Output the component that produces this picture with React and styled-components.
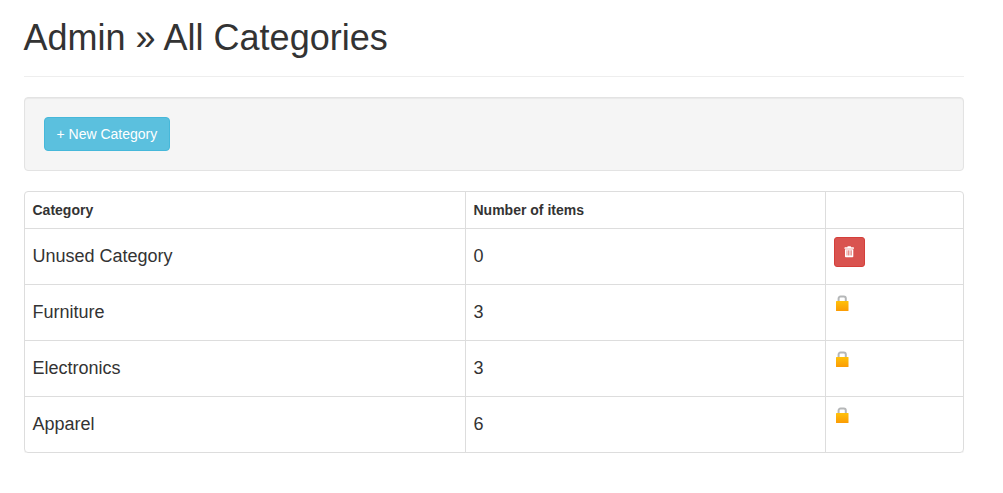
import React from 'react';
import styled, { createGlobalStyle } from 'styled-components';

const GlobalStyle = createGlobalStyle`
  *, *::before, *::after { box-sizing: border-box; }
  body {
    margin: 0;
    background: #fff;
    color: #333;
    font: 14px/20px "Liberation Sans", Arial, sans-serif;
  }
`;

const Container = styled.main`
  width: 940px;
  margin-left: 23.5px;
  padding-top: 17px;
`;

const PageHeader = styled.header`
  height: 60px;
  margin-bottom: 20px;
  padding-top: 1px;
  border-bottom: 1px solid #eee;
`;

const Title = styled.h1`
  margin: 0;
  font-size: 36px;
  font-weight: 500;
  line-height: 39.6px;
`;

const Well = styled.section`
  display: flex;
  align-items: center;
  height: 74px;
  padding: 19px;
  margin-bottom: 20px;
  background: #f5f5f5;
  border: 1px solid #e3e3e3;
  border-radius: 4px;
  box-shadow: inset 0 1px 1px rgba(0, 0, 0, 0.05);
`;

const Button = styled.button`
  border: 1px solid #46b8da;
  border-radius: 4px;
  background: #5bc0de;
  color: #fff;
  font: inherit;
  padding: 6px 12px;
  white-space: nowrap;
`;

const DeleteButton = styled(Button)`
  display: flex;
  align-items: center;
  justify-content: center;
  width: 31px;
  height: 30px;
  padding: 0;
  border-color: #d43f3a;
  border-radius: 3px;
  background: #d9534f;
`;

const Panel = styled.div`
  border: 1px solid #ddd;
  border-radius: 4px;
  box-shadow: 0 1px 0 rgba(0, 0, 0, 0.06);
`;

const Row = styled.div`
  display: grid;
  grid-template-columns: 440px 360px 1fr;
  height: ${(p) => (p.$header ? 36 : 56)}px;
  border-top: ${(p) => (p.$header ? 0 : 1)}px solid #ddd;
`;

const Cell = styled.div`
  padding: 8px;

  & + & {
    border-left: 1px solid #ddd;
  }
`;

const HeaderCell = styled(Cell)`
  font-weight: 700;
`;

const CellTitle = styled.h4`
  margin: 9px 0 0;
  font-size: 18px;
  font-weight: 500;
  line-height: 20px;
`;

const LockSvg = styled.svg`
  display: block;
  margin: 2px 0 0 1px;
`;

const TrashIcon = () => (
  <svg width="12" height="12" viewBox="0 0 12 12" aria-hidden="true">
    <path
      fill="#fff"
      d="M4.4 1.2V.8Q4.4.2 5 .2H7.4Q8 .2 8 .8V1.2H10.3Q11 1.2 11 2V2.8H1.4V2Q1.4 1.2 2.1 1.2ZM2 3.2H10.3V10.4Q10.3 11.2 9.5 11.2H2.8Q2 11.2 2 10.4Z"
    />
    <path d="M4 4.3V9.5M5.5 4.3V9.5M7 4.3V9.5M8.4 4.3V9.5" stroke="#d9534f" strokeWidth="0.65" />
  </svg>
);

const LockIcon = () => (
  <LockSvg width="14" height="17" viewBox="0 0 14 17" role="img" aria-label="Locked">
    <defs>
      <linearGradient id="lockBody" x1="0" y1="0" x2="0" y2="1">
        <stop offset="0" stopColor="#ffc10a" />
        <stop offset="1" stopColor="#fb9c05" />
      </linearGradient>
    </defs>
    <path
      d="M3.6 7V3.6Q3.6 1.6 5.6 1.6H8.8Q10.8 1.6 10.8 3.6V7"
      fill="none"
      stroke="#b5b7b8"
      strokeWidth="2"
    />
    <rect x="1" y="6" width="12.5" height="10" rx="0.5" fill="url(#lockBody)" />
  </LockSvg>
);

const categories = [
  { name: 'Unused Category', items: 0 },
  { name: 'Furniture', items: 3 },
  { name: 'Electronics', items: 3 },
  { name: 'Apparel', items: 6 },
];

export default function App() {
  return (
    <>
      <GlobalStyle />
      <Container>
        <PageHeader>
          <Title>Admin » All Categories</Title>
        </PageHeader>
        <Well>
          <Button type="button">+ New Category</Button>
        </Well>
        <Panel role="table">
          <Row $header role="row">
            <HeaderCell role="columnheader">Category</HeaderCell>
            <HeaderCell role="columnheader">Number of items</HeaderCell>
            <HeaderCell role="columnheader" />
          </Row>
          {categories.map(({ name, items }) => (
            <Row key={name} role="row">
              <Cell role="cell"><CellTitle>{name}</CellTitle></Cell>
              <Cell role="cell"><CellTitle>{items}</CellTitle></Cell>
              <Cell role="cell">
                {items === 0 ? (
                  <DeleteButton type="button" aria-label="Delete category">
                    <TrashIcon />
                  </DeleteButton>
                ) : (
                  <LockIcon />
                )}
              </Cell>
            </Row>
          ))}
        </Panel>
      </Container>
    </>
  );
}
